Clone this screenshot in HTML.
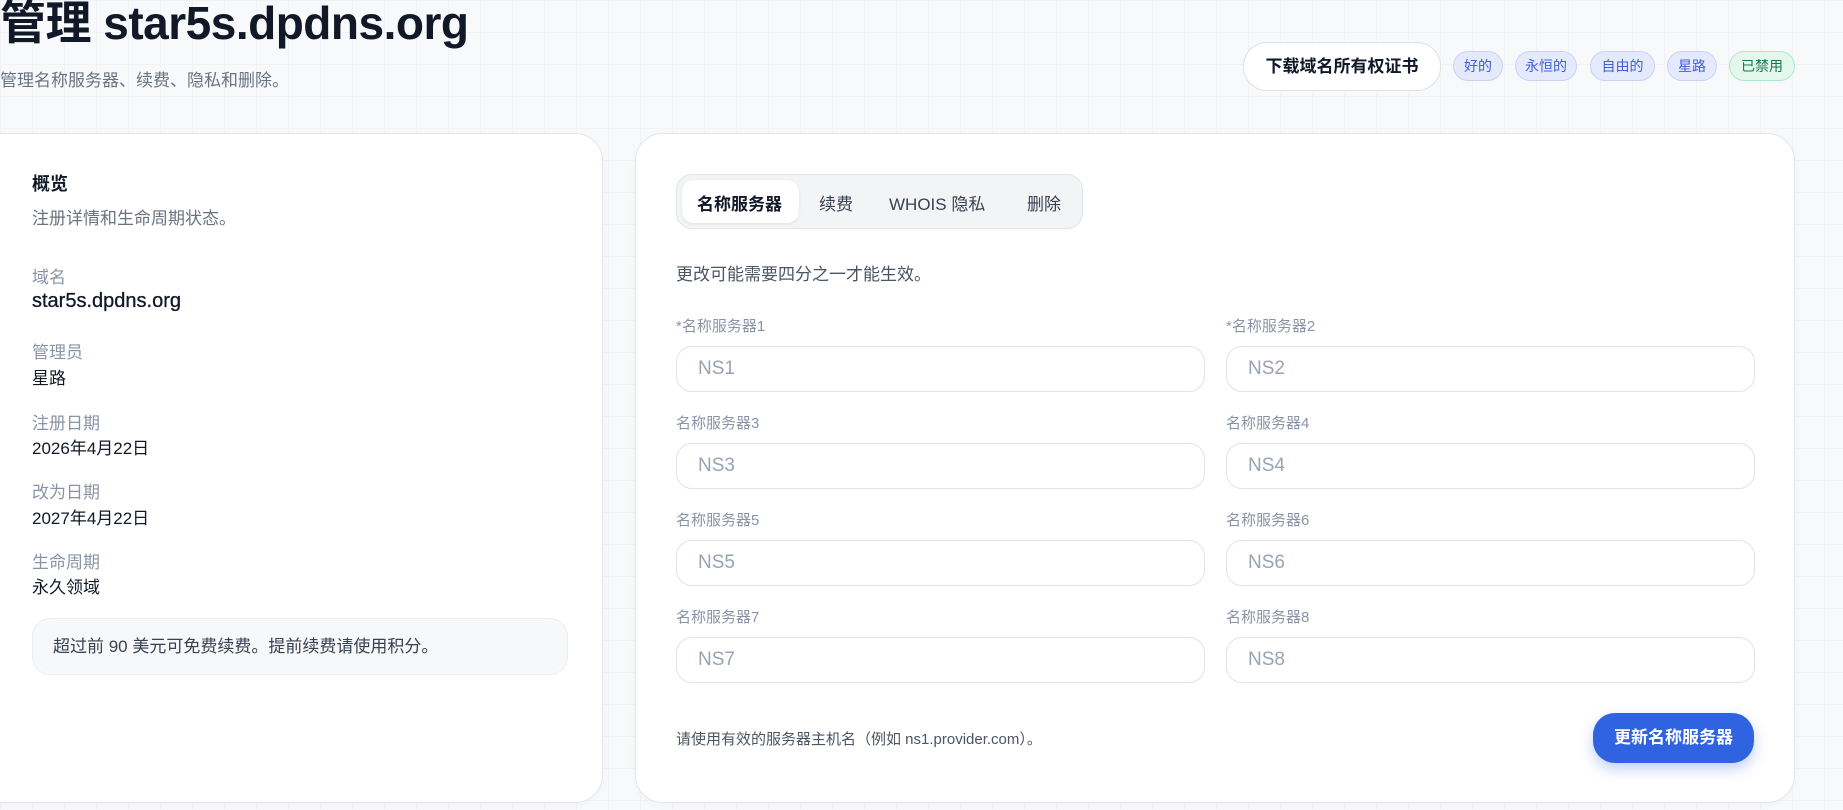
<!DOCTYPE html>
<html><head><meta charset="utf-8"><style>
*{box-sizing:border-box;margin:0;padding:0}
body{width:1843px;height:810px;overflow:hidden;position:relative;font-family:"Liberation Sans","Noto Sans CJK SC",sans-serif;color:#111827;
background-color:#f8f9fb;background-image:linear-gradient(#f1f2f5 1px,transparent 1px),linear-gradient(90deg,#f1f2f5 1px,transparent 1px);background-size:32px 32px}
.a{position:absolute;white-space:nowrap}
.card{position:absolute;background:#fff;border:1px solid #e3e6ec;border-radius:28px;box-shadow:0 2px 8px rgba(0,0,0,.03)}
.lbl{color:#8a94a6;font-size:17px}
.val{color:#111827;font-size:17px}
.flab{color:#8a94a6;font-size:15px}
.inp{position:absolute;height:46px;width:529px;border:1px solid #dfe3ea;border-radius:16px;background:#fff;color:#9aa3b2;font-size:19px;padding-left:21px;line-height:44px}
.badge{position:absolute;top:51px;height:30px;border-radius:15px;background:#e4e9fb;border:1px solid #c9d3f5;color:#3f5ed8;font-size:14px;text-align:center;line-height:28px}
</style></head><body>
<div class="a" style="left:0;top:-13px;font-size:46px;font-weight:bold;letter-spacing:-0.5px">管理 star5s.dpdns.org</div>
<div class="a" style="left:0;top:66px;font-size:17px;color:#6b7280">管理名称服务器、续费、隐私和删除。</div>
<div class="a" style="left:1243px;top:42px;width:198px;height:49px;border:1px solid #dde1e8;border-radius:24px;background:#fff;font-size:17px;font-weight:bold;text-align:center;line-height:47px">下载域名所有权证书</div>
<div class="badge" style="left:1453px;width:50px">好的</div>
<div class="badge" style="left:1515px;width:62px">永恒的</div>
<div class="badge" style="left:1590px;width:65px">自由的</div>
<div class="badge" style="left:1667px;width:50px">星路</div>
<div class="badge" style="left:1729px;width:66px;background:#e3f7ec;border-color:#aee9c7;color:#16774a">已禁用</div>

<div class="card" style="left:-30px;top:133px;width:633px;height:670px"></div>
<div class="a" style="left:32px;top:170px;font-size:18px;font-weight:bold">概览</div>
<div class="a" style="left:32px;top:204px;font-size:17px;color:#6b7280">注册详情和生命周期状态。</div>
<div class="a lbl" style="left:32px;top:263px">域名</div>
<div class="a" style="left:32px;top:290px;font-size:20px;color:#111827;-webkit-text-stroke:0.3px #111827">star5s.dpdns.org</div>
<div class="a lbl" style="left:32px;top:338px">管理员</div>
<div class="a val" style="left:32px;top:364px">星路</div>
<div class="a lbl" style="left:32px;top:409px">注册日期</div>
<div class="a val" style="left:32px;top:434px">2026年4月22日</div>
<div class="a lbl" style="left:32px;top:478px">改为日期</div>
<div class="a val" style="left:32px;top:504px">2027年4月22日</div>
<div class="a lbl" style="left:32px;top:548px">生命周期</div>
<div class="a val" style="left:32px;top:573px">永久领域</div>
<div class="a" style="left:32px;top:618px;width:536px;height:57px;background:#f7f8fa;border:1px solid #eceef2;border-radius:18px;font-size:17px;color:#374151;padding-left:20px;line-height:55px">超过前 90 美元可免费续费。提前续费请使用积分。</div>

<div class="card" style="left:635px;top:133px;width:1160px;height:670px"></div>
<div class="a" style="left:676px;top:174px;width:407px;height:55px;background:#f3f4f6;border:1px solid #e1e4e9;border-radius:16px"></div>
<div class="a" style="left:682px;top:180px;width:117px;height:43px;background:#fff;border-radius:12px;box-shadow:0 1px 3px rgba(0,0,0,.08)"></div>
<div class="a" style="left:697px;top:190px;font-size:17px;font-weight:bold">名称服务器</div>
<div class="a" style="left:819px;top:190px;font-size:17px;color:#374151">续费</div>
<div class="a" style="left:889px;top:190px;font-size:17px;color:#374151">WHOIS 隐私</div>
<div class="a" style="left:1027px;top:190px;font-size:17px;color:#374151">删除</div>
<div class="a" style="left:676px;top:260px;font-size:17px;color:#4b5563">更改可能需要四分之一才能生效。</div>

<div class="a flab" style="left:676px;top:315px">*名称服务器1</div><div class="a flab" style="left:1226px;top:315px">*名称服务器2</div>
<div class="inp" style="left:676px;top:346px">NS1</div><div class="inp" style="left:1226px;top:346px">NS2</div>
<div class="a flab" style="left:676px;top:412px">名称服务器3</div><div class="a flab" style="left:1226px;top:412px">名称服务器4</div>
<div class="inp" style="left:676px;top:443px">NS3</div><div class="inp" style="left:1226px;top:443px">NS4</div>
<div class="a flab" style="left:676px;top:509px">名称服务器5</div><div class="a flab" style="left:1226px;top:509px">名称服务器6</div>
<div class="inp" style="left:676px;top:540px">NS5</div><div class="inp" style="left:1226px;top:540px">NS6</div>
<div class="a flab" style="left:676px;top:606px">名称服务器7</div><div class="a flab" style="left:1226px;top:606px">名称服务器8</div>
<div class="inp" style="left:676px;top:637px">NS7</div><div class="inp" style="left:1226px;top:637px">NS8</div>

<div class="a" style="left:676px;top:728px;font-size:15px;color:#4b5563">请使用有效的服务器主机名（例如 ns1.provider.com）。</div>
<div class="a" style="left:1593px;top:713px;width:161px;height:50px;background:#2f63e0;border-radius:22px;color:#fff;font-size:17px;font-weight:bold;text-align:center;line-height:50px;box-shadow:0 6px 14px rgba(47,99,224,.3)">更新名称服务器</div>
</body></html>
